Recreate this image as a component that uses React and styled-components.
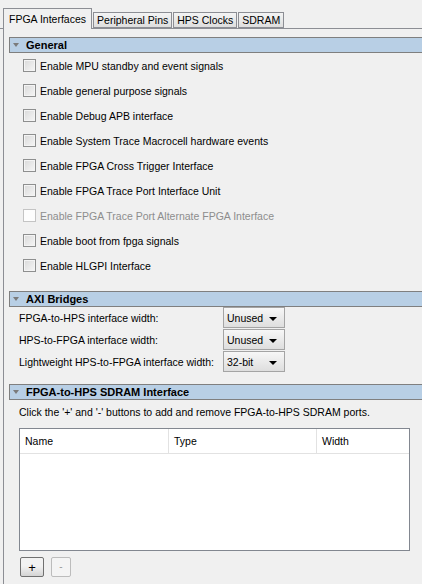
import React from 'react';
import styled, { createGlobalStyle } from 'styled-components';

const GlobalStyle = createGlobalStyle`
    html, body {
        margin: 0;
        padding: 0;
        background: #f0f0f0;
    }
    body {
        font-family: "Liberation Sans", Arial, sans-serif;
        font-size: 10.5px;
        color: #000;
    }
`;

const Window = styled.div`
    width: 422px;
    height: 584px;
    overflow: hidden;
    background: #f0f0f0;
    padding-top: 8px;
    box-sizing: border-box;
`;

const TabBar = styled.div`
    display: flex;
    align-items: flex-end;
    padding-left: 3px;
    height: 20px;
    border-bottom: 1px solid #8c8e94;
    box-sizing: content-box;
`;

const Tab = styled.div`
    height: ${p => (p.active ? '21px' : '16px')};
    margin-bottom: ${p => (p.active ? '-1px' : '0')};
    padding: 0 ${p => (p.active ? '5px' : '3px')};
    margin-right: 1px;
    box-sizing: border-box;
    border: 1px solid #8c8e94;
    border-bottom: ${p => (p.active ? 'none' : '1px solid #8c8e94')};
    background: ${p => (p.active ? '#f0f0f0' : 'linear-gradient(#f4f4f4, #dedede)')};
    display: flex;
    align-items: center;
    font-size: 10.5px;
    line-height: 13px;
    white-space: nowrap;
    position: relative;
    z-index: ${p => (p.active ? 1 : 0)};
`;

const Panel = styled.div`
    margin-left: 3px;
    border-left: 1px solid #8c8e94;
    padding: 8px 0 0 5px;
    height: 560px;
    box-sizing: border-box;
`;

const SectionHeader = styled.div`
    display: flex;
    align-items: center;
    height: 16px;
    box-sizing: border-box;
    border: 1px solid #7f7f7f;
    border-right: none;
    background: #b8cfe5;
    font-weight: bold;
    font-size: 11px;
    margin-top: ${p => p.top || 0}px;
`;

const Arrow = styled.span`
    width: 0;
    height: 0;
    border-left: 3.5px solid transparent;
    border-right: 3.5px solid transparent;
    border-top: 4px solid #7b7b7b;
    margin: 0 7px 0 3px;
`;

const CheckList = styled.div`
    display: flex;
    flex-direction: column;
`;

const CheckRow = styled.label`
    display: flex;
    align-items: center;
    height: 25px;
    padding-left: 14px;
    color: ${p => (p.disabled ? '#8d8d8d' : '#000')};
`;

const Box = styled.span`
    width: 13px;
    height: 13px;
    box-sizing: border-box;
    border: 1px solid ${p => (p.disabled ? '#c4c4c4' : '#8e8f8f')};
    background: ${p => (p.disabled ? '#fdfdfd' : 'linear-gradient(135deg, #d9d9d9, #f6f6f6)')};
    box-shadow: ${p => (p.disabled ? 'none' : 'inset 0 0 0 1px #f4f4f4')};
    margin-right: 4px;
    flex-shrink: 0;
`;

const FieldGrid = styled.div`
    display: grid;
    grid-template-columns: 204px 62px;
    row-gap: 1px;
    padding: 0 0 0 10px;
    align-items: center;
`;

const FieldLabel = styled.span`
    white-space: nowrap;
`;

const Combo = styled.div`
    height: 21px;
    box-sizing: border-box;
    border: 1px solid #a4a4a4;
    background: linear-gradient(#f7f7f7, #dedede);
    display: flex;
    align-items: center;
    justify-content: space-between;
    padding: 0 7px 0 3px;
`;

const ComboArrow = styled.span`
    width: 0;
    height: 0;
    border-left: 4px solid transparent;
    border-right: 4px solid transparent;
    border-top: 4px solid #000;
    margin-top: 2px;
`;

const Hint = styled.div`
    padding: 6px 0 0 10px;
    height: 21px;
    box-sizing: border-box;
`;

const Table = styled.div`
    margin: 7px 0 0 10px;
    width: 391px;
    height: 123px;
    box-sizing: border-box;
    border: 1px solid #828790;
    background: #fff;
`;

const HeadRow = styled.div`
    display: grid;
    grid-template-columns: 149px 148px 1fr;
    height: 24px;
    border-bottom: 1px solid #e2e2e2;
`;

const HeadCell = styled.div`
    display: flex;
    align-items: center;
    padding-left: 5px;
    border-right: 1px solid #e2e2e2;
    &:last-child {
        border-right: none;
    }
`;

const ButtonRow = styled.div`
    display: flex;
    gap: 7px;
    padding: 6px 0 0 11px;
`;

const SmallButton = styled.button`
    width: ${p => p.w}px;
    height: 20px;
    box-sizing: border-box;
    padding: 0;
    font-family: "Liberation Sans", Arial, sans-serif;
    font-size: ${p => (p.disabled ? '10px' : '13px')};
    line-height: 1;
    border-radius: 2px;
    border: 1px solid ${p => (p.disabled ? '#bcbcbc' : '#707070')};
    background: ${p => (p.disabled ? '#f4f4f4' : 'linear-gradient(#f2f2f2 45%, #d4d4d4)')};
    color: ${p => (p.disabled ? '#9a9a9a' : '#000')};
    display: flex;
    align-items: center;
    justify-content: center;
`;

const tabs = ['FPGA Interfaces', 'Peripheral Pins', 'HPS Clocks', 'SDRAM'];

const checks = [
    { label: 'Enable MPU standby and event signals' },
    { label: 'Enable general purpose signals' },
    { label: 'Enable Debug APB interface' },
    { label: 'Enable System Trace Macrocell hardware events' },
    { label: 'Enable FPGA Cross Trigger Interface' },
    { label: 'Enable FPGA Trace Port Interface Unit' },
    { label: 'Enable FPGA Trace Port Alternate FPGA Interface', disabled: true },
    { label: 'Enable boot from fpga signals' },
    { label: 'Enable HLGPI Interface' }
];

const bridges = [
    { label: 'FPGA-to-HPS interface width:', value: 'Unused' },
    { label: 'HPS-to-FPGA interface width:', value: 'Unused' },
    { label: 'Lightweight HPS-to-FPGA interface width:', value: '32-bit' }
];

export default function App() {
    return (
        <Window>
            <GlobalStyle />
            <TabBar>
                {tabs.map((t, i) => (
                    <Tab key={t} active={i === 0}>{t}</Tab>
                ))}
            </TabBar>
            <Panel>
                <SectionHeader><Arrow />General</SectionHeader>
                <CheckList>
                    {checks.map(c => (
                        <CheckRow key={c.label} disabled={c.disabled}>
                            <Box disabled={c.disabled} />
                            {c.label}
                        </CheckRow>
                    ))}
                </CheckList>

                <SectionHeader top={13}><Arrow />AXI Bridges</SectionHeader>
                <FieldGrid>
                    {bridges.map(b => (
                        <React.Fragment key={b.label}>
                            <FieldLabel>{b.label}</FieldLabel>
                            <Combo>{b.value}<ComboArrow /></Combo>
                        </React.Fragment>
                    ))}
                </FieldGrid>

                <SectionHeader top={12}><Arrow />FPGA-to-HPS SDRAM Interface</SectionHeader>
                <Hint>Click the '+' and '-' buttons to add and remove FPGA-to-HPS SDRAM ports.</Hint>
                <Table>
                    <HeadRow>
                        <HeadCell>Name</HeadCell>
                        <HeadCell>Type</HeadCell>
                        <HeadCell>Width</HeadCell>
                    </HeadRow>
                </Table>
                <ButtonRow>
                    <SmallButton w={24}>+</SmallButton>
                    <SmallButton w={20} disabled>-</SmallButton>
                </ButtonRow>
            </Panel>
        </Window>
    );
}
